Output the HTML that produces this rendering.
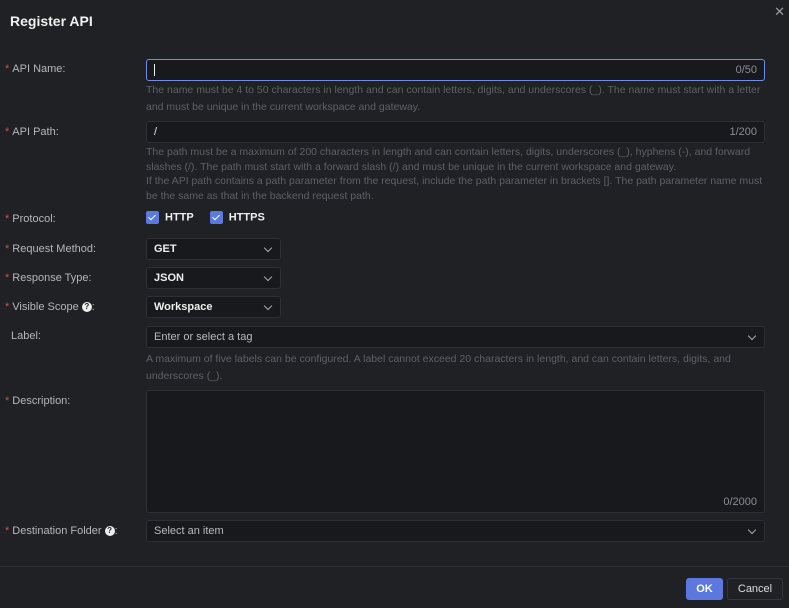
<!DOCTYPE html><html><head><style>
*{box-sizing:border-box;margin:0;padding:0}
body{width:789px;height:608px;background:#1f2124;font-family:"Liberation Sans",sans-serif;position:relative;overflow:hidden;color:#c9cbcf}
.a{position:absolute}
.t{left:10px;top:13px;font-size:14px;font-weight:bold;color:#f0f0f0}
.x{right:4px;top:4px;color:#9a9ca0;font-size:13px}
.lb{left:5px;font-size:11px;color:#b5b7bb}
.lb b{color:#e0473e;font-weight:normal;margin-right:3px}
.in{left:146px;width:619px;height:22px;background:#17191c;border:1px solid #2c2f34;border-radius:3px;font-size:11px;color:#e8e8e8;padding:4px 7px}
.h{left:146px;width:622px;font-size:10.5px;color:#5d6066}
.sel{left:146px;width:135px;height:22px;background:#17191c;border:1px solid #2c2f34;border-radius:3px;font-size:11px;font-weight:bold;color:#eee;padding:4px 7px}
.ch{position:absolute;right:9px;top:6px;width:6px;height:6px;border-right:1.5px solid #aaa;border-bottom:1.5px solid #aaa;transform:rotate(45deg)}
.cnt{position:absolute;right:7px;top:4px;color:#8a8d92;font-size:11px;font-weight:normal}
.cb{display:inline-block;width:13px;height:13px;background:#5a7ae0;border-radius:2px;vertical-align:middle;position:relative;margin-right:6px}
.cb:after{content:"";position:absolute;left:4px;top:2px;width:3px;height:6px;border-right:1.5px solid #fff;border-bottom:1.5px solid #fff;transform:rotate(45deg)}
.q{display:inline-block;width:10px;height:10px;border-radius:50%;background:#eee;color:#1f2124;font-size:8px;font-weight:bold;text-align:center;line-height:10px;vertical-align:1px}
</style></head><body>
<div class="a t">Register API</div><div class="a x">✕</div>
<div class="a lb" style="top:63px"><b>*</b>API Name:</div>
<div class="a in" style="top:59px;border-color:#6f8ee8"><span style="display:inline-block;width:1px;height:12px;background:#eee;vertical-align:middle"></span><span class="cnt">0/50</span></div>
<div class="a h" style="top:82px;line-height:17px">The name must be 4 to 50 characters in length and can contain letters, digits, and underscores (_). The name must start with a letter and must be unique in the current workspace and gateway.</div>
<div class="a lb" style="top:126px"><b>*</b>API Path:</div>
<div class="a in" style="top:121px">/<span class="cnt">1/200</span></div>
<div class="a h" style="top:145px;line-height:14.5px">The path must be a maximum of 200 characters in length and can contain letters, digits, underscores (_), hyphens (-), and forward slashes (/). The path must start with a forward slash (/) and must be unique in the current workspace and gateway.<br>If the API path contains a path parameter from the request, include the path parameter in brackets []. The path parameter name must be the same as that in the backend request path.</div>
<div class="a lb" style="top:213px"><b>*</b>Protocol:</div>
<div class="a" style="left:146px;top:211px;font-size:11px;font-weight:bold;color:#eee"><span class="cb"></span>HTTP<span style="display:inline-block;width:16px"></span><span class="cb"></span>HTTPS</div>
<div class="a lb" style="top:243px"><b>*</b>Request Method:</div>
<div class="a sel" style="top:238px">GET<span class="ch"></span></div>
<div class="a lb" style="top:272px"><b>*</b>Response Type:</div>
<div class="a sel" style="top:267px">JSON<span class="ch"></span></div>
<div class="a lb" style="top:301px"><b>*</b>Visible Scope <span class="q">?</span>:</div>
<div class="a sel" style="top:296px">Workspace<span class="ch"></span></div>
<div class="a lb" style="top:330px;left:11px">Label:</div>
<div class="a in" style="top:326px;color:#b8babe">Enter or select a tag<span class="ch"></span></div>
<div class="a h" style="top:351px;line-height:17px">A maximum of five labels can be configured. A label cannot exceed 20 characters in length, and can contain letters, digits, and underscores (_).</div>
<div class="a lb" style="top:395px"><b>*</b>Description:</div>
<div class="a in" style="top:390px;height:123px"><span class="cnt" style="top:auto;bottom:4px">0/2000</span></div>
<div class="a lb" style="top:525px"><b>*</b>Destination Folder <span class="q">?</span>:</div>
<div class="a in" style="top:520px;color:#b8babe">Select an item<span class="ch"></span></div>
<div class="a" style="left:0;top:566px;width:789px;height:1px;background:#2c2f33"></div>
<div class="a" style="left:686px;top:578px;width:37px;height:22px;background:#5b78de;border-radius:3px;color:#fff;font-size:11px;font-weight:bold;text-align:center;line-height:22px">OK</div>
<div class="a" style="left:727px;top:578px;width:56px;height:22px;border:1px solid #33363b;border-radius:3px;color:#ddd;font-size:11px;text-align:center;line-height:20px">Cancel</div>
</body></html>
